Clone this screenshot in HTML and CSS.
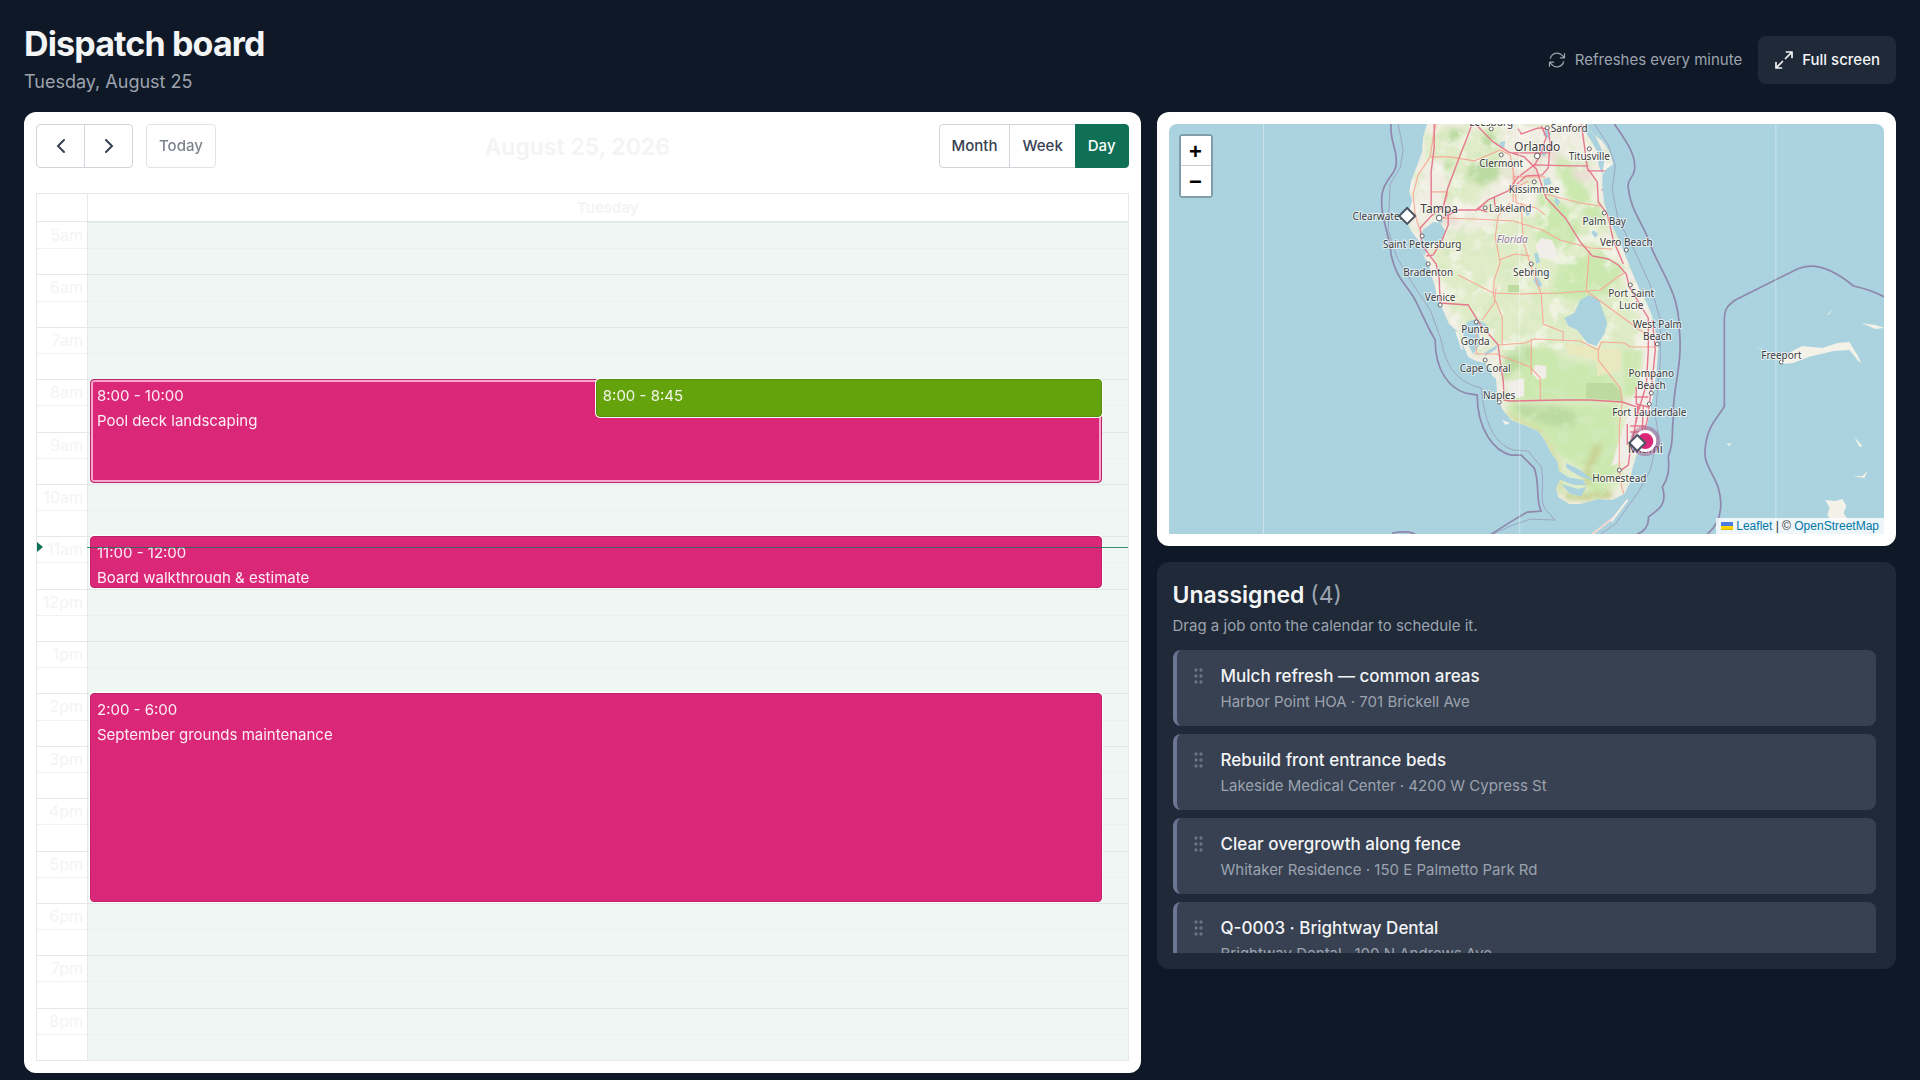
FILE: index.html
```html
<!DOCTYPE html>
<html lang="en">
<head>
<meta charset="utf-8">
<meta name="viewport" content="width=device-width, initial-scale=1">
<title>Dispatch board</title>
<link rel="stylesheet" href="styles.css">
</head>
<body>
<header class="page-header">
  <div>
    <h1>Dispatch board</h1>
    <p class="date">Tuesday, August 25</p>
  </div>
  <div class="actions">
    <span class="refresh">
      <svg width="20" height="20" viewBox="0 0 24 24" fill="none" stroke="currentColor" stroke-width="1.5" stroke-linecap="round" stroke-linejoin="round" aria-hidden="true"><path d="M16.023 9.348h4.992v-.001M2.985 19.644v-4.992m0 0h4.992m-4.993 0 3.181 3.183a8.25 8.25 0 0 0 13.803-3.7M4.031 9.865a8.25 8.25 0 0 1 13.803-3.7l3.181 3.182m0-4.991v4.99"/></svg>
      Refreshes every minute
    </span>
    <button type="button" class="fullscreen">
      <svg width="20" height="20" viewBox="0 0 20 20" fill="none" stroke="currentColor" stroke-width="1.7" stroke-linecap="round" stroke-linejoin="round" aria-hidden="true"><path d="M12.500 2H18v5.500M18 2l-6.500 6.500M7.500 18H2v-5.500M2 18l6.500-6.500"/></svg>
      Full screen
    </button>
  </div>
</header>
<main class="board">
  <section class="calendar" aria-label="Schedule">
    <div class="toolbar">
      <div class="tool-left">
        <div class="group">
          <button type="button" class="tool arrow" aria-label="Previous day"><svg width="10" height="16" viewBox="0 0 10 16" fill="none" stroke="currentColor" stroke-width="2" stroke-linecap="round"><path d="M8 2 2 8l6 6"/></svg></button>
          <button type="button" class="tool arrow" aria-label="Next day"><svg width="10" height="16" viewBox="0 0 10 16" fill="none" stroke="currentColor" stroke-width="2" stroke-linecap="round"><path d="m2 2 6 6-6 6"/></svg></button>
        </div>
        <button type="button" class="tool today" disabled>Today</button>
      </div>
      <h2>August 25, 2026</h2>
      <div class="group views">
        <button type="button" class="tool">Month</button>
        <button type="button" class="tool">Week</button>
        <button type="button" class="tool active" aria-pressed="true">Day</button>
      </div>
    </div>
    <div class="frame">
      <div class="day-head"><span></span><span class="day-name">Tuesday</span></div>
      <div class="day-body">
        <div class="axis">
          <span>5am</span><span></span><span>6am</span><span></span><span>7am</span><span></span><span>8am</span><span></span>
          <span>9am</span><span></span><span>10am</span><span></span><span>11am</span><span></span><span>12pm</span><span></span>
          <span>1pm</span><span></span><span>2pm</span><span></span><span>3pm</span><span></span><span>4pm</span><span></span>
          <span>5pm</span><span></span><span>6pm</span><span></span><span>7pm</span><span></span><span>8pm</span><span></span>
        </div>
        <div class="lane">
          <div class="slots">
            <i></i><i></i><i></i><i></i><i></i><i></i><i></i><i></i><i></i><i></i><i></i><i></i><i></i><i></i><i></i><i></i>
            <i></i><i></i><i></i><i></i><i></i><i></i><i></i><i></i><i></i><i></i><i></i><i></i><i></i><i></i><i></i><i></i>
          </div>
          <div class="events">
            <div class="event ringed" style="top:18.75%;bottom:68.75%"><div class="clip"><time>8:00 - 10:00</time><span>Pool deck landscaping</span></div></div>
            <div class="event green half" style="top:18.75%;bottom:76.5625%"><div class="clip"><time>8:00 - 8:45</time></div></div>
            <div class="event" style="top:37.5%;bottom:56.25%"><div class="clip"><time>11:00 - 12:00</time><span>Board walkthrough &amp; estimate</span></div></div>
            <div class="event" style="top:56.25%;bottom:18.75%"><div class="clip"><time>2:00 - 6:00</time><span>September grounds maintenance</span></div></div>
          </div>
        </div>
        <div class="now" style="top:38.8%"></div>
      </div>
    </div>
  </section>
  <div class="side">
    <section class="map-card" aria-label="Job map">
      <div class="map">
        <svg class="tiles" viewBox="1169 124 715 410" preserveAspectRatio="xMidYMid slice" role="img" aria-label="Map of Florida">
          <defs>
            <clipPath id="land"><path id="coast" d="M1427 124 1423 137 1422 152 1416 168 1411 181 1409 192 1412 200 1409 211 1407 222 1411 231 1418 240 1421 249 1424 257 1429 264 1430 273 1434 283 1436 293 1440 304 1445 315 1449 324 1457 331 1462 343 1468 357 1476 361 1485 363 1492 371 1496 380 1497 396 1502 409 1511 420 1524 425 1538 431 1545 441 1551 453 1557 461 1559 471 1568 477 1583 480 1586 485 1573 485 1560 480 1556 488 1558 497 1569 504 1580 504 1598 499 1612 500 1624 494 1629 484 1632 469 1636 456 1640 444 1645 432 1649 415 1653 394 1656 370 1658 349 1656 336 1652 317 1646 302 1638 287 1630 268 1621 245 1611 224 1604 204 1602 186 1602 175 1606 169 1613 164 1610 153 1602 141 1592 133 1584 124Z"/></clipPath>
            <filter id="soft" x="-10%" y="-10%" width="120%" height="120%"><feGaussianBlur stdDeviation="2.500"/></filter>
            <filter id="mottle" x="0" y="0" width="100%" height="100%">
              <feTurbulence type="fractalNoise" baseFrequency=".07" numOctaves="4" seed="8"/>
              <feColorMatrix values="0 0 0 0 .66  0 0 0 0 .82  0 0 0 0 .52  0 5 0 0 -2.500"/>
            </filter>
            <filter id="pale" x="0" y="0" width="100%" height="100%">
              <feTurbulence type="fractalNoise" baseFrequency=".06" numOctaves="4" seed="21"/>
              <feColorMatrix values="0 0 0 0 .96  0 0 0 0 .94  0 0 0 0 .89  5 0 0 0 -2.600"/>
            </filter>
          </defs>
          <rect x="1169" y="124" width="715" height="410" fill="#aad3df"/>
          <use href="#coast" fill="#f0eee2"/>
          <g clip-path="url(#land)">
            <g filter="url(#soft)">
              <path fill="#e0ecc8" d="M1424 140 1445 126 1466 132 1502 125 1500 165 1475 205 1450 205 1446 160 1425 160ZM1455 235 1505 222 1540 215 1590 200 1600 230 1622 280 1640 320 1625 390 1625 430 1618 490 1565 495 1545 440 1505 410 1510 370 1490 340 1450 310 1440 280 1432 250Z"/>
              <path fill="#cbe8ae" d="M1538 190 1566 205 1578 222 1580 240 1560 252 1536 242ZM1552 150 1572 165 1585 187 1600 207 1608 232 1585 215 1562 192ZM1560 262 1600 252 1624 268 1610 293 1580 300 1550 296ZM1518 350 1550 347 1562 360 1600 365 1622 390 1620 401 1500 400 1520 382ZM1505 405 1618 405 1616 470 1605 493 1590 497 1585 470 1560 455 1545 435 1515 418ZM1622 350 1642 350 1638 395 1624 398Z"/>
              <path fill="#bcdba2" d="M1450 128 1464 130 1460 148 1448 143ZM1470 162 1498 160 1500 178 1482 186 1466 178ZM1444 162 1452 160 1450 176 1444 175ZM1507 352 1530 345 1532 358 1516 370 1504 382 1501 372ZM1512 404 1556 405 1580 415 1572 428 1547 425 1520 414ZM1485 130 1499 138 1494 150 1482 145Z"/>
              <path fill="#eadfd4" d="M1442 207 1454 203 1458 224 1440 226ZM1418 224 1426 226 1434 248 1425 252ZM1500 165 1520 172 1538 165 1540 178 1520 184 1505 180ZM1525 150 1555 148 1560 160 1530 164ZM1570 168 1590 165 1592 182 1575 180Z"/>
              <path fill="none" stroke="#c9d294" stroke-width="8" d="M1598 444C1594 460 1586 465 1586 485M1565 496 1590 497 1612 494"/>
              <path fill="none" stroke="#d5dba5" stroke-width="6" d="M1505 414 1540 433 1556 460 1560 494"/>
            </g>
            <rect x="1400" y="124" width="260" height="385" filter="url(#mottle)" opacity=".55"/>
            <rect x="1400" y="124" width="260" height="225" filter="url(#pale)" opacity=".6"/>
            <path fill="#bddaa0" d="M1586 383 1613 383 1621 392 1623 401 1586 398ZM1508 285 1519 285 1519 292 1508 292Z"/>
            <path fill="#e9e8bf" d="M1565 343 1596 348 1621 350 1620 370 1597 376 1596 360 1568 354Z"/>
            <path fill="#f1eee9" d="M1541 238 1552 240 1557 252 1554 259 1540 258 1535 246ZM1535 365 1546 366 1546 378 1538 380 1532 374ZM1508 382 1524 378 1524 396 1508 400ZM1647 320 1657 324 1656 380 1646 436 1632 458 1622 462 1611 466 1618 444 1634 395 1644 365Z"/>
            <g fill="#aad3df">
              <path d="M1423 230 1433 222 1440 223 1445 231 1442 239 1434 243 1427 249 1424 256 1419 243ZM1436 216l4-2 3 8-4 2ZM1580 300 1589 295 1599 300 1603 312 1607 323 1604 334 1596 346 1587 343 1577 330 1568 326 1564 318 1574 313ZM1467 322l8-3 9 4 4 4-10-1 2 18-7 10-5-9-6-13ZM1484 353l13-8-1 4-11 7ZM1500 142l5-1-1 7-5-2ZM1542 148l5 4-3 5-4-4ZM1543 179l6-2 2 7-7 2ZM1525 207l5 7-3 2-4-6ZM1556 197l4 5-3 4-3-6ZM1545 130l6 3-3 6-5-4ZM1537 252l3 10-4 2-2-10ZM1537 276l5 9-4 3-5-8ZM1545 270l5 2-2 6-5-3ZM1587 215l4 7-3 2-3-7ZM1593 230l5 4-3 4-4-5ZM1587 128l8 8 8 17-4 2-8-14-8-12ZM1599 152l5 9-2 14-4-11ZM1566 463l14 7 14 11-15-5-13-8ZM1561 484l17 5 8-2-5 9-11-2Z"/>
            </g>
            <g fill="none" stroke="#f6a996" stroke-width="1.100">
              <path d="M1436 124 1433 137 1430 157 1418 175 1413 194 1415 215 1419 228M1430 157 1450 157 1474 161 1500 150 1510 155 1514 177 1516 203 1536 208 1545 215M1440 218 1475 219 1513 221 1542 230 1560 240 1590 248 1612 249M1510 203 1498 216 1495 237 1500 263 1494 280 1493 295 1502 317 1502 345M1458 275 1493 293 1520 294 1560 293 1587 291 1600 290 1617 277 1624 273M1521 203 1523 241 1531 267 1541 294 1543 324 1563 332 1563 340M1589 250 1586 291M1586 291 1615 312 1648 336M1545 194 1580 203 1600 206M1498 345 1525 343 1534 339 1580 341 1598 350 1601 342 1624 343 1630 347 1655 347M1476 330 1476 354 1496 354 1530 367 1540 378 1540 400M1531 339 1531 375M1598 349 1598 360 1620 388 1622 402M1622 402 1619 425 1619 470 1622 490 1627 500 1614 517 1592 534M1482 320 1494 303 1496 287M1514 177 1545 177M1512 190 1528 181M1513 162 1513 202M1499 260 1515 254 1530 256M1448 193 1444 205M1432 192 1448 192"/>
            </g>
            <g fill="none" stroke="#e6788c" stroke-width="1.400">
              <path d="M1472 124 1466 140 1460 155 1448 187 1443 207 1431 216 1420 228 1422 245 1429 255 1436 264 1439 278 1440 303 1468 305 1479 323 1498 345 1500 362 1503 380 1504 400 1510 401 1560 400 1590 400 1622 402 1640 408M1434 124 1434 148 1431 172 1431 214M1458 210 1477 210 1488 200 1508 191 1517 178 1534 165 1570 166 1588 166M1448 210 1448 225 1442 240 1433 255 1426 256M1443 218 1458 210M1475 124 1493 142 1508 152 1524 157 1536 169 1540 181 1546 198 1565 218 1580 242 1592 256 1608 259 1618 265 1626 274 1629 287 1640 305 1648 318M1581 124 1584 145 1587 168 1597 182 1598 202 1607 214 1613 240 1623 264M1518 129 1521 134 1538 128 1548 129 1550 144 1548 168 1542 175 1526 176 1517 184M1534 166 1540 155 1546 137 1541 126M1510 153 1550 153M1587 171 1607 171M1601 190 1608 190M1488 200 1477 209 1487 212M1494 198 1495 208"/>
              <path d="M1648 318 1648 350 1646 385 1639 408 1635 425 1630 450 1628 465 1618 472M1652 320 1655 350 1652 380 1647 420 1643 436M1636 387 1636 404 1648 407M1630 426 1645 426M1634 397 1648 397M1627 424 1627 445M1638 404 1634 432M1643 405 1642 432M1630 432 1646 432"/>
            </g>
          </g>
          <path fill="none" stroke="#f2d7cf" stroke-width="2" d="M1627 500 1614 517 1592 534"/>
          <g fill="#f3f1e8">
            <path d="m1455 331 3 1 5 18-2-1ZM1490 364l5 14-3-2ZM1502 420l8 3-5 2ZM1610 521l17-22 1 1-16 22ZM1755 346l16 11 13 2 6-7 12-6 20 2 15-5 12-1 3 5 5 8 4 8-4-3-8-10-16 1-25 6-15 6-11 1-8-7Z"/>
            <path d="m1861 323 14 2 9 3-9 1ZM1826 315l6-5-3 4ZM1854 437l8 9-3 1ZM1825 500l10 1 7-2 4 7-3 7 4 6-4 6-11-2-5-8 2-7ZM1726 444l5-1-2 3ZM1852 476l10 0 5-5-3 7Z"/>
          </g>
          <g fill="none" stroke="#8f87ac" stroke-width="1.700">
            <path d="M1391 124C1389 142 1398 149 1396 165 1395 175 1384 180 1382 194 1379 215 1390 236 1391 255 1397 280 1406 284 1415 300L1429 329 1435 340C1435 372 1450 388 1465 393L1477 395C1477 430 1494 451 1511 455L1521 455 1534 468C1540 484 1535 500 1541 511L1527 512 1510 522 1491 534"/>
            <path d="M1614 124C1624 139 1637 155 1634 171 1633 178 1626 180 1628 188 1630 212 1646 227 1652 250 1663 275 1679 295 1679 330 1683 365 1671 393 1673 419 1671 431 1674 443 1668 456 1669 471 1668 478 1662 487 1668 505 1657 510 1648 517 1649 526 1643 532 1637 534"/>
            <path d="M1707 534C1725 519 1721 497 1717 485 1709 466 1703 463 1705 447 1707 425 1719 416 1724 406L1724 320C1724 308 1728 305 1735 300L1797 269C1815 261 1835 271 1853 286 1867 289 1875 292 1884 297M1392 533C1403 531 1411 532 1415 534"/>
          </g>
          <g fill="none" stroke="#9999b9" stroke-width=".8">
            <path d="M1398 124 1403 150 1400 168 1390 184 1388 230 1397 258 1412 283 1430 310 1441 340C1446 370 1460 383 1481 388C1484 420 1493 445 1514 450L1528 451 1541 467C1545 485 1538 502 1546 510L1555 520 1530 519 1510 526 1493 534M1594 124 1608 145 1615 166 1612 190 1618 220 1634 250 1650 285 1660 320 1660 360 1655 415 1658 435 1650 470 1638 492 1615 524 1600 534"/>
          </g>
          <g fill="#fff" opacity=".4"><rect x="1263" y="124" width="1" height="410"/><rect x="1519" y="124" width="1" height="410"/><rect x="1775" y="124" width="1" height="410"/></g>
          <g fill="#fff" stroke="#555" stroke-width=".9">
            <circle cx="1491" cy="129" r="2"/><circle cx="1547" cy="128" r="2"/><circle cx="1501" cy="155" r="2"/><circle cx="1537" cy="156" r="2.800"/><circle cx="1589" cy="149" r="2"/><circle cx="1534" cy="182" r="2"/><circle cx="1439" cy="218" r="2.800"/><circle cx="1485" cy="208" r="2"/><circle cx="1422" cy="236" r="2"/><circle cx="1428" cy="264" r="2"/><circle cx="1440" cy="305" r="2"/><circle cx="1531" cy="264" r="2"/><circle cx="1604" cy="213" r="2"/><circle cx="1626" cy="250" r="2"/><circle cx="1630" cy="285" r="2"/><circle cx="1476" cy="322" r="2"/><circle cx="1485" cy="360" r="2"/><circle cx="1499" cy="402" r="2"/><circle cx="1657" cy="344" r="2"/><circle cx="1651" cy="393" r="2"/><circle cx="1649" cy="404" r="2"/><circle cx="1619" cy="470" r="2"/><circle cx="1781" cy="362" r="2"/>
          </g>
          <g class="places">
            <text x="1491" y="126">Leesburg</text><text x="1569" y="132">Sanford</text><text class="city" x="1537" y="151">Orlando</text><text x="1589" y="160">Titusville</text><text x="1501" y="167">Clermont</text><text x="1534" y="193">Kissimmee</text><text x="1510" y="212">Lakeland</text><text class="city" x="1439" y="213">Tampa</text><text x="1378" y="220">Clearwater</text><text x="1422" y="248">Saint Petersburg</text><text x="1428" y="276">Bradenton</text><text x="1440" y="301">Venice</text><text class="state" x="1512" y="243">Florida</text><text x="1531" y="276">Sebring</text><text x="1604" y="225">Palm Bay</text><text x="1626" y="246">Vero Beach</text><text x="1631" y="297">Port Saint</text><text x="1631" y="309">Lucie</text><text x="1657" y="328">West Palm</text><text x="1657" y="340">Beach</text><text x="1475" y="333">Punta</text><text x="1475" y="345">Gorda</text><text x="1485" y="372">Cape Coral</text><text x="1499" y="399">Naples</text><text x="1651" y="377">Pompano</text><text x="1651" y="389">Beach</text><text x="1649" y="416">Fort Lauderdale</text><text class="city" x="1645" y="453">Miami</text><text x="1619" y="482">Homestead</text><text x="1781" y="359">Freeport</text>
          </g>
          <circle cx="1645" cy="441" r="15" fill="#a0467f" opacity=".45"/>
          <circle cx="1645" cy="441" r="9.500" fill="#db2777" stroke="#fff" stroke-width="3"/>
          <path d="m1637 435 8 8-8 8-8-8ZM1407 208l8 8-8 8-8-8Z" fill="#fff" stroke="#4b5563" stroke-width="2"/>
        </svg>
        <div class="zoom"><button type="button" aria-label="Zoom in">+</button><button type="button" aria-label="Zoom out">−</button></div>
        <div class="attribution"><a href="#"><svg width="12" height="8" viewBox="0 0 12 8" aria-hidden="true"><path fill="#4C7BE1" d="M0 0h12v4H0z"/><path fill="#FFD500" d="M0 4h12v3H0z"/><path fill="#E0BC00" d="M0 7h12v1H0z"/></svg> Leaflet</a> | © <a href="#">OpenStreetMap</a></div>
      </div>
    </section>
    <section class="unassigned">
      <h2>Unassigned <span>(4)</span></h2>
      <p>Drag a job onto the calendar to schedule it.</p>
      <ul class="jobs">
        <li><svg class="grip" width="10" height="16" viewBox="0 0 10 16" aria-hidden="true"><g id="dots" fill="currentColor"><circle cx="2" cy="2" r="1.700"/><circle cx="7" cy="2" r="1.700"/><circle cx="2" cy="8" r="1.700"/><circle cx="7" cy="8" r="1.700"/><circle cx="2" cy="14" r="1.700"/><circle cx="7" cy="14" r="1.700"/></g></svg><div><h3>Mulch refresh — common areas</h3><p>Harbor Point HOA · 701 Brickell Ave</p></div></li>
        <li><svg class="grip" width="10" height="16" viewBox="0 0 10 16" aria-hidden="true"><use href="#dots"/></svg><div><h3>Rebuild front entrance beds</h3><p>Lakeside Medical Center · 4200 W Cypress St</p></div></li>
        <li><svg class="grip" width="10" height="16" viewBox="0 0 10 16" aria-hidden="true"><use href="#dots"/></svg><div><h3>Clear overgrowth along fence</h3><p>Whitaker Residence · 150 E Palmetto Park Rd</p></div></li>
        <li><svg class="grip" width="10" height="16" viewBox="0 0 10 16" aria-hidden="true"><use href="#dots"/></svg><div><h3>Q-0003 · Brightway Dental</h3><p>Brightway Dental · 100 N Andrews Ave</p></div></li>
      </ul>
    </section>
  </div>
</main>
</body>
</html>
```
FILE: styles.css
```css
* { box-sizing: border-box; }
body {
  margin: 0;
  padding: 24px 24px 0;
  background: #0f1826;
  color: #f3f4f6;
  font: 15px/24px Inter, "Liberation Sans", sans-serif;
}
h1, h2, h3, p, ul { margin: 0; padding: 0; }
button { font: inherit; cursor: pointer; }

.page-header { display: flex; justify-content: space-between; align-items: center; margin-bottom: 16px; }
h1 { font-size: 34px; line-height: 40px; font-weight: 700; letter-spacing: -0.025em; }
.date { margin-top: 4px; font-size: 18px; line-height: 28px; color: #9ca3af; }
.actions { display: flex; align-items: center; gap: 16px; }
.refresh { display: flex; align-items: center; gap: 8px; color: #9ca3af; }
.fullscreen {
  display: flex; align-items: center; gap: 8px;
  height: 48px; padding: 0 16px;
  border: 0; border-radius: 8px;
  background: #1f2937; color: #f3f4f6; font-weight: 500;
}

.board { display: grid; grid-template-columns: minmax(0, 151fr) minmax(0, 100fr); gap: 16px; align-items: start; }

.calendar { padding: 12px; border-radius: 12px; background: #fff; }
.toolbar { display: flex; justify-content: space-between; align-items: center; margin-bottom: 25px; }
.toolbar h2 { padding-top: 2px; font-size: 23px; line-height: 32px; font-weight: 600; color: #f3f4f6; }
.tool-left { display: flex; gap: 13px; }
.group { display: flex; }
.tool {
  height: 44px; padding: 0 12px;
  border: 1px solid #d1d5db; border-radius: 4px;
  background: #fff; color: #374151; font-weight: 500;
}
.group .tool + .tool { margin-left: -1px; border-top-left-radius: 0; border-bottom-left-radius: 0; }
.group .tool:not(:last-child) { border-top-right-radius: 0; border-bottom-right-radius: 0; }
.tool.arrow { display: grid; place-items: center; width: 49px; }
.today { opacity: .65; cursor: default; }
.tool.active { background: #0f7055; border-color: #0f7055; color: #fff; }

.frame { border: 1px solid #e5e7eb; }
.day-head, .day-body { display: grid; grid-template-columns: 50px minmax(0, 1fr); }
.day-head { height: 28px; border-bottom: 1px solid #e5e7eb; }
.day-name { border-left: 1px solid #e5e7eb; line-height: 28px; text-align: center; font-weight: 600; color: #f3f4f6; }
.day-body { position: relative; height: 838px; }
.axis, .slots { display: grid; grid-template-rows: repeat(32, minmax(0, 1fr)); }
.axis span { padding-right: 4px; text-align: right; line-height: 24px; font-size: 16px; color: #f3f4f6; border-top: 1px dotted #e5e7eb; }
.axis span:nth-child(odd) { border-top-style: solid; }
.axis span:first-child, .slots i:first-child { border-top-color: transparent; }
.lane { position: relative; border-left: 1px solid #e5e7eb; background: #eef7f4; }
.slots { height: 100%; }
.slots i { border-top: 1px solid #e9f2ef; }
.slots i:nth-child(odd) { border-top-color: #e0e9e7; }
.events { position: absolute; inset: 0 2.5% 0 2px; }
.event {
  position: absolute; left: 0; right: 0;
  margin-bottom: 1px; padding: 4px 6px;
  border: 1px solid #be2268; border-radius: 4px;
  background: #db2777; color: #fff;
  box-shadow: 0 0 0 1px #fff;
}
.clip { height: 100%; overflow: hidden; display: flex; flex-direction: column; gap: 1px; }
.clip > * { flex: none; opacity: .92; }
.ringed { box-shadow: inset 0 0 0 2px #f5a8cb; }
.half { left: 50%; }
.green { background: #65a30d; border-color: #588e0b; }
.now { position: absolute; left: 50px; right: 0; border-top: 1px solid rgba(15, 112, 85, .8); }
.now::before {
  content: ""; position: absolute; left: -50px; top: -6px;
  border: 5px solid transparent; border-left: 6px solid #0f7055; border-right: 0;
}

.side { display: grid; gap: 16px; }
.map-card { padding: 12px; border-radius: 12px; background: #fff; }
.map { position: relative; height: 410px; overflow: hidden; border-radius: 8px 8px 0 0; }
.tiles { display: block; width: 100%; height: 100%; }
.places text {
  font: 10px "Noto Sans", sans-serif; text-anchor: middle; fill: #3c3c3c;
  stroke: rgba(255, 255, 255, .65); stroke-width: 2px; paint-order: stroke;
}
.places .city { font-size: 12px; }
.places .state { font-style: italic; fill: #8d7698; }
.zoom {
  position: absolute; left: 10px; top: 10px;
  display: grid; border: 2px solid rgba(0, 0, 0, .25); border-radius: 4px;
  background-clip: padding-box;
}
.zoom button {
  width: 30px; height: 30px; padding: 2px 0 0;
  border: 0; background: #fff; color: #000;
  font: bold 22px/28px "Liberation Sans", Arial, sans-serif;
}
.zoom button:first-child { border-bottom: 1px solid #ccc; }
.attribution {
  position: absolute; right: 0; bottom: 0; padding: 0 5px;
  background: rgba(255, 255, 255, .8); color: #333;
  font: 12px/16px "Liberation Sans", Arial, sans-serif;
}
.attribution a { color: #0078a8; text-decoration: none; }

.unassigned { padding: 16px; border-radius: 12px; background: #1f2937; }
.unassigned h2 { font-size: 23px; line-height: 34px; font-weight: 600; }
.unassigned h2 span { font-weight: 400; color: #9ca3af; }
.unassigned p { color: #9ca3af; }
.unassigned > p { margin-top: 2px; }
.jobs {
  display: grid; gap: 8px; grid-auto-rows: 76px;
  height: 303px; margin-top: 12px; padding-right: 4px;
  overflow: hidden; list-style: none;
}
.jobs li {
  display: flex; gap: 17px; padding: 12px 17px;
  border-left: 4px solid #6b7693; border-radius: 8px; background: #374151;
}
.grip { flex: none; margin-top: 6px; color: #6b7280; }
.jobs h3 { font-size: 17px; line-height: 28px; font-weight: 500; }
```
